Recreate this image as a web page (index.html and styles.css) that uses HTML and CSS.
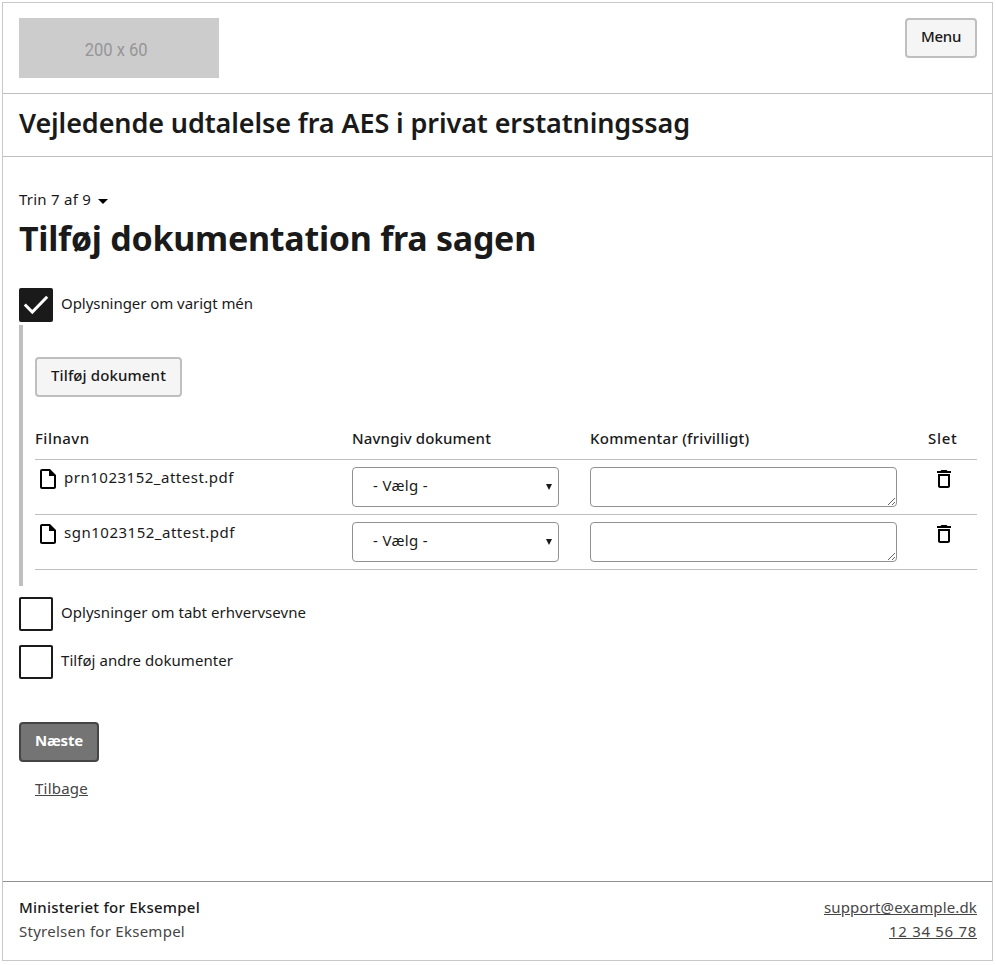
FILE: index.html
```
<!DOCTYPE html>
<html lang="da">
<head>
<meta charset="utf-8">
<title>Tilføj dokumentation fra sagen</title>
<link rel="stylesheet" href="styles.css">
</head>
<body>
<div class="page">
  <header class="header">
    <div class="logo"><span class="t-logo">200 x 60</span></div>
    <button class="btn"><span class="t-menu">Menu</span></button>
  </header>
  <div class="solution">Vejledende udtalelse fra AES i privat erstatningssag</div>
  <main class="main">
    <div class="step"><span class="t-step">Trin 7 af 9</span><i class="caret"></i></div>
    <h1>Tilføj dokumentation fra sagen</h1>
    <label class="check"><span class="box checked"><svg viewBox="0 0 34 34"><path d="M5.8 16.500 13.300 24 28.200 8.800"/></svg></span><span class="t-varigt">Oplysninger om varigt mén</span></label>
    <section class="collapse">
      <button class="btn"><span class="t-add">Tilføj dokument</span></button>
      <div class="table">
        <div class="row head">
          <span class="t-c1">Filnavn</span><span class="t-c2">Navngiv dokument</span><span class="t-c3">Kommentar (frivilligt)</span><span class="t-c4">Slet</span>
        </div>
        <div class="row">
          <div class="file"><svg class="doc" viewBox="0 0 24 24"><path d="M14 2H6c-1.100 0-1.990.9-1.990 2L4 20c0 1.100.89 2 1.990 2H18c1.100 0 2-.9 2-2V8l-6-6zM6 20V4h7v5h5v11H6z"/></svg><span>prn1023152_attest.pdf</span></div>
          <div class="select">- Vælg -<i class="tri"></i></div>
          <textarea></textarea>
          <svg class="trash" viewBox="0 0 24 24"><path d="M6 19c0 1.100.9 2 2 2h8c1.100 0 2-.9 2-2V7H6v12zM8 9h8v10H8V9zm7.500-5l-1-1h-5l-1 1H5v2h14V4h-3.500z"/></svg>
        </div>
        <div class="row">
          <div class="file"><svg class="doc" viewBox="0 0 24 24"><path d="M14 2H6c-1.100 0-1.990.9-1.990 2L4 20c0 1.100.89 2 1.990 2H18c1.100 0 2-.9 2-2V8l-6-6zM6 20V4h7v5h5v11H6z"/></svg><span>sgn1023152_attest.pdf</span></div>
          <div class="select">- Vælg -<i class="tri"></i></div>
          <textarea></textarea>
          <svg class="trash" viewBox="0 0 24 24"><path d="M6 19c0 1.100.9 2 2 2h8c1.100 0 2-.9 2-2V7H6v12zM8 9h8v10H8V9zm7.500-5l-1-1h-5l-1 1H5v2h14V4h-3.500z"/></svg>
        </div>
      </div>
    </section>
    <label class="check gap"><span class="box"></span><span class="t-tabt">Oplysninger om tabt erhvervsevne</span></label>
    <label class="check gap2"><span class="box"></span><span class="t-andre">Tilføj andre dokumenter</span></label>
    <button class="btn primary"><span class="t-next">Næste</span></button>
    <a class="back">Tilbage</a>
  </main>
  <footer class="footer">
    <div><div class="strong">Ministeriet for Eksempel</div><div class="t-sty">Styrelsen for Eksempel</div></div>
    <div class="contact"><a class="t-mail">support@example.dk</a><a class="t-tel">12 34 56 78</a></div>
  </footer>
</div>
</body>
</html>
```
FILE: styles.css
```
* { box-sizing: border-box; }
body { margin: 0; padding: 2px; background: #fff; color: #1a1a1a; font: 400 15px/24px "Noto Sans", sans-serif; }
.page { width: 991px; height: 959px; border: 1px solid #c8c8c8; display: flex; flex-direction: column; }
.header { display: flex; justify-content: space-between; align-items: flex-start; height: 91px; padding: 15px 15px 0 16px; border-bottom: 1px solid #bfbfbf; }
.logo { width: 200px; height: 60px; background: #ccc; color: #969696; font: 400 19px/63px Roboto, sans-serif; display: flex; justify-content: center; padding-right: 6px; }
.t-logo { transform: scaleX(.87); }
.btn { display: block; height: 40px; padding: 0 14px 4px; border: 2px solid #bfbfbf; border-radius: 4px; background: #f5f5f5; color: #1a1a1a; font: 500 15px/32px "Noto Sans", sans-serif; white-space: nowrap; }
.solution { height: 63px; padding: 9px 16px; border-bottom: 1px solid #bfbfbf; font-size: 27px; line-height: 40px; font-weight: 600; letter-spacing: -.106px; white-space: nowrap; }
.main { flex: 1; padding: 30px 15px 0 16px; }
.step { display: flex; align-items: center; height: 24px; }
.caret { margin: 5px 0 0 7px; border: 5px solid transparent; border-top-color: #000; border-bottom: 0; }
h1 { margin: 3px 0 0; height: 48px; font-size: 34px; line-height: 49px; font-weight: 700; letter-spacing: -.267px; white-space: nowrap; }
.check { display: flex; gap: 8px; height: 34px; line-height: 30px; }
h1 + .check { margin-top: 26px; }
.box { width: 34px; height: 34px; border: 2px solid #1a1a1a; border-radius: 2px; }
.box.checked { background: #1a1a1a; border: 0; }
.box svg { display: block; fill: none; stroke: #fff; stroke-width: 3; }
.collapse { margin-top: 3px; height: 261px; border-left: 4px solid #bfbfbf; padding: 32px 0 0 12px; }
.table { margin-top: 24px; }
.row { display: grid; grid-template-columns: 317px 238px 338px 1fr; height: 55px; padding-top: 7px; border-bottom: 1px solid #bfbfbf; }
.row.head { height: 39px; padding-top: 5px; font-weight: 500; }
.file { display: flex; line-height: 20px; letter-spacing: .507px; }
.doc { width: 24px; height: 24px; margin: 0 4px 0 1px; }
.select { position: relative; width: 207px; height: 40px; border: 1px solid #919191; border-radius: 4px; padding-left: 20px; line-height: 35px; letter-spacing: .348px; }
.tri { position: absolute; right: 6px; top: 16px; border: 3px solid transparent; border-top: 6px solid #1a1a1a; border-bottom: 0; }
textarea { width: 307px; height: 40px; border: 1px solid #919191; border-radius: 4px; display: block; }
.trash { width: 24px; height: 24px; margin-left: 4px; }
.gap { margin-top: 11px; }
.gap2 { margin-top: 14px; }
.primary { margin-top: 43px; background: #747474; border-color: #454545; color: #fff; font-weight: 700; }
.back { display: inline-block; margin: 14px 0 0 16px; color: #454545; text-decoration: underline; letter-spacing: .228px; }
.footer { display: flex; justify-content: space-between; height: 79px; border-top: 1px solid #919191; padding: 13px 15px 0 16px; color: #454545; }
.strong { font-weight: 500; color: #1a1a1a; letter-spacing: .243px; }
.contact { display: flex; flex-direction: column; align-items: flex-end; text-decoration: underline; }
.t-menu { letter-spacing: -.301px; }
.t-step { letter-spacing: .239px; }
.t-varigt { letter-spacing: -.049px; }
.t-add { letter-spacing: .12px; }
.t-c1 { letter-spacing: .453px; }
.t-c2 { letter-spacing: .131px; }
.t-c3 { letter-spacing: .254px; }
.t-c4 { letter-spacing: .7px; }
.t-tabt { letter-spacing: .04px; }
.t-andre { letter-spacing: .058px; }
.t-next { letter-spacing: -.191px; }
.t-sty { letter-spacing: .261px; }
.t-mail { letter-spacing: .143px; }
.t-tel { letter-spacing: .696px; }
```
